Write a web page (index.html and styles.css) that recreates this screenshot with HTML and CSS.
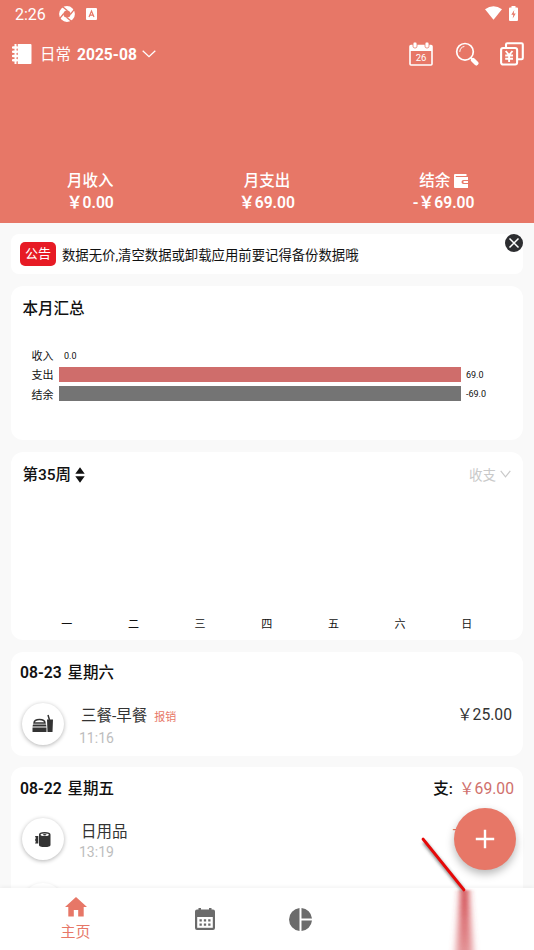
FILE: index.html
```html
<!DOCTYPE html>
<html lang="zh-CN">
<head>
<meta charset="utf-8">
<title>日常账本</title>
<link rel="stylesheet" href="styles.css">
</head>
<body>
<div class="app">
  <header class="header">
    <div class="status">
      <span class="clock">2:26</span>
      <svg class="status-aperture" width="16" height="16" viewBox="0 0 16 16"><circle cx="8" cy="8" r="5.700" fill="none" stroke="#fff" stroke-width="4.400"/><path d="M8.500 4.800 3.600.8M11.200 8.500l4-4.900M7.500 11.200l4.900 4M4.800 7.500l-4 4.900" stroke="#e77767" stroke-width="1.300"/></svg>
      <svg class="status-app" width="11" height="12" viewBox="0 0 11 12"><rect width="11" height="12" rx="1" fill="#fff"/><path d="M3 9 5.500 3 8 9M4 7.200h3" fill="none" stroke="#e77767" stroke-width="1.200"/></svg>
      <span class="grow"></span>
      <svg class="wifi" width="17" height="14" viewBox="0 0 17 14"><path d="M0 3.200Q8.500-2.600 17 3.200L8.500 13.800Z" fill="#fff"/></svg>
      <svg class="battery" width="9" height="15" viewBox="0 0 9 15"><path d="M2.500 0h4v1.500H8q1 0 1 1V14q0 1-1 1H1q-1 0-1-1V2.500q0-1 1-1h1.500z" fill="#fff"/><path d="M5.300 4 2.300 8.700h2L3.700 12.500l3-5h-2z" fill="#e77767"/></svg>
    </div>
    <div class="toolbar">
      <svg class="book" width="20" height="20" viewBox="0 0 20 20"><path d="M2.500 0h2v20h-2zM5.800 0H18.500q1 0 1 1v18q0 1-1 1H5.800z" fill="#fff"/><path d="M1 3.500h4M1 7.700h4M1 12h4M1 16.200h4" stroke="#fff" stroke-width="2.400" stroke-linecap="round"/></svg>
      <span class="book-name">日常</span>
      <span class="month">2025-08</span>
      <svg class="chevron" width="14" height="8" viewBox="0 0 14 8"><path d="m.7.700 6.300 6 6.300-6" fill="none" stroke="#fff" stroke-width="1.300"/></svg>
      <span class="grow"></span>
      <svg class="tool-calendar" width="24" height="24" viewBox="0 0 24 24"><path d="M1 3.500h22V9H1z" fill="#fff"/><rect x="1" y="3.500" width="22" height="19.500" rx="1" fill="none" stroke="#fff" stroke-width="1.600"/><g fill="#fff" stroke="#e77767" stroke-width=".8"><rect x="4" y="0" width="4" height="6" rx="1.800"/><rect x="16" y="0" width="4" height="6" rx="1.800"/></g><text x="12" y="18.700" text-anchor="middle" class="cal-day">26</text></svg>
      <svg class="tool-search" width="24" height="24" viewBox="0 0 24 24"><circle cx="10" cy="9.800" r="8.300" fill="none" stroke="#fff" stroke-width="1.700"/><path d="M4.800 9.500Q5 5.300 9 4.500" fill="none" stroke="#fff" stroke-width="1" stroke-linecap="round"/><path d="m15.800 15.800 2 2" stroke="#fff" stroke-width="1.600"/><path d="m18 18 3.300 3.300" stroke="#fff" stroke-width="4.400" stroke-linecap="round"/></svg>
      <svg class="tool-money" width="24" height="24" viewBox="0 0 24 24"><path d="M6 5V2.500Q6 1.200 7.300 1.200H21.500Q22.800 1.200 22.800 2.500V16q0 1.300-1.300 1.300H18" fill="none" stroke="#fff" stroke-width="2.100"/><rect x="1.100" y="6" width="16" height="16.500" rx="2" fill="none" stroke="#fff" stroke-width="2.100"/><path d="m5.700 9 3.400 4 3.400-4M9.100 13v7M5.200 13.500H13M5.200 16.700H13" fill="none" stroke="#fff" stroke-width="1.900"/></svg>
    </div>
    <div class="totals">
      <div class="total"><span>月收入</span><span class="amount">￥0.00</span></div>
      <div class="total"><span>月支出</span><span class="amount">￥69.00</span></div>
      <div class="total"><span class="balance">结余<svg width="14" height="14" viewBox="0 0 14 14"><path d="M1 0h11.500v2H1.800v1H14v3H9.500Q7.500 6 7.500 8t2 2H14v4H1q-1 0-1-1V1q0-1 1-1z" fill="#fff"/><path d="M9.500 7H14v2H9.500z" fill="#fff"/></svg></span><span class="amount">-￥69.00</span></div>
    </div>
  </header>

  <main class="content">
    <section class="card notice">
      <span class="tag">公告</span>
      <span>数据无价,清空数据或卸载应用前要记得备份数据哦</span>
      <svg class="close" width="18" height="18" viewBox="0 0 18 18"><circle cx="9" cy="9" r="9" fill="#2c2d30"/><path d="m4.500 4.500 9 9m0-9-9 9" stroke="#fff" stroke-width="1.500"/></svg>
    </section>

    <section class="card summary">
      <h2>本月汇总</h2>
      <div class="chart">
        <div class="row"><span class="label">收入</span><i class="bar empty"></i><span class="value">0.0</span></div>
        <div class="row"><span class="label">支出</span><i class="bar expense"></i><span class="value">69.0</span></div>
        <div class="row"><span class="label">结余</span><i class="bar remain"></i><span class="value">-69.0</span></div>
      </div>
    </section>

    <section class="card week">
      <div class="week-head">
        <h2>第35周</h2>
        <svg class="sorter" width="10" height="16" viewBox="0 0 10 16"><path d="M.3 6.800 5 .3l4.700 6.500zM.3 9.200h9.400L5 15.700z" fill="#111"/></svg>
        <span class="grow"></span>
        <span class="filter">收支</span>
        <svg class="filter-arrow" width="11" height="8" viewBox="0 0 11 8"><path d="m.7.800 4.800 6 4.800-6" fill="none" stroke="#c9c9c9" stroke-width="1.200"/></svg>
      </div>
      <div class="days"><span>一</span><span>二</span><span>三</span><span>四</span><span>五</span><span>六</span><span>日</span></div>
    </section>

    <section class="card day">
      <div class="day-head"><span>08-23</span><span>星期六</span></div>
      <div class="entry">
        <span class="icon"><svg width="22" height="20" viewBox="0 0 22 20"><path d="M2 9Q2.300 5.500 7.500 5.500T13 9z" fill="none" stroke="#333" stroke-width="1.500"/><path d="M1 10.500h13l.5 2H.5zM.5 13.500h14V18H.5zM15 5.500h6L20.500 18h-5z" fill="#333"/><path d="M17.500 6 16 1" stroke="#333" stroke-width="1.500"/></svg></span>
        <div class="info"><div class="name">三餐-早餐<span class="reimburse">报销</span></div><div class="time">11:16</div></div>
        <span class="cost">￥25.00</span>
      </div>
    </section>

    <section class="card day last">
      <div class="day-head"><span>08-22</span><span>星期五</span><span class="grow"></span><span>支:</span><span class="sum">￥69.00</span></div>
      <div class="entry">
        <span class="icon"><svg width="18" height="18" viewBox="0 0 18 18"><path d="M5 4.500V15q0 2 5.700 2t5.800-2V4.500Q16.500 2 10.700 2T5 4.500zM1 6h3.300v7.500H1l.8-1.800L1 10l.8-2z" fill="#333"/><ellipse cx="10.700" cy="4.700" rx="4.200" ry="1.300" fill="#fff"/><ellipse cx="10.700" cy="4.700" rx="1.800" ry=".8" fill="#333"/></svg></span>
        <div class="info"><div class="name">日用品</div><div class="time">13:19</div></div>
        <span class="cost hidden-cost">-</span>
      </div>
      <div class="entry"><span class="icon faint"></span></div>
    </section>
  </main>

  <nav class="nav">
    <div class="tab active"><svg width="22" height="20" viewBox="0 0 22 20"><path d="m11 0 11 10h-3.300v9.500h-5.500V13H8.800v6.500H3.300V10H0z" fill="#e77767"/></svg><span>主页</span></div>
    <div class="tab tab-cal"><svg width="20" height="22" viewBox="0 0 20 22"><path d="M2 1.500h1.500V0h2.500v1.500h8V0h2.500v1.500H18q2 0 2 2V20q0 2-2 2H2q-2 0-2-2V3.500q0-2 2-2z" fill="#6b6b6b"/><path d="M2.200 9h15.600v10.800H2.200z" fill="#fff"/><path d="M4.500 12.300h11M4.500 16.700h11" stroke="#6b6b6b" stroke-width="2.300" stroke-dasharray="2.300 2.050"/></svg></div>
    <div class="tab tab-pie"><svg width="23" height="23" viewBox="0 0 23 23"><path d="M10.500 0v23A11.550 11.550 0 0 1 10.500 0zM12.500 0A11.500 11.500 0 0 1 23 10.400H12.500zM12.500 12.600H23A11.500 11.500 0 0 1 12.500 23z" fill="#6b6b6b"/></svg></div>
  </nav>

  <button class="fab" aria-label="添加"><svg width="20" height="20" viewBox="0 0 20 20"><path d="M10 .8v18.400M.8 10h18.400" stroke="#fff" stroke-width="2.400"/></svg></button>
  <svg class="pointer" width="84" height="120" viewBox="0 0 84 120">
    <defs>
      <filter id="soft" x="-150%" y="-20%" width="400%" height="140%"><feGaussianBlur stdDeviation="3.800 1.200"/></filter>
      <filter id="shade" x="-20%" y="-20%" width="140%" height="140%"><feGaussianBlur stdDeviation="1.800"/></filter>
      <linearGradient id="fade" x1="0" y1="0" x2="0" y2="1"><stop offset="0" stop-color="#c8282d"/><stop offset=".4" stop-color="#d0454a" stop-opacity=".78"/><stop offset="1" stop-color="#d8666b" stop-opacity=".6"/></linearGradient>
    </defs>
    <path d="M43 60h7l6 76H37z" fill="url(#fade)" filter="url(#soft)"/>
    <path d="m6 12 39 48" stroke="#444" stroke-opacity=".6" stroke-width="4" filter="url(#shade)"/>
    <path d="M5 9 46 60" stroke="#e60808" stroke-width="2.800" stroke-linecap="round"/>
  </svg>
</div>
</body>
</html>
```
FILE: styles.css
```css
* { box-sizing: border-box; }
body {
  margin: 0;
  font-family: Roboto, "Noto Sans CJK SC", sans-serif;
  color: #111;
}
svg { display: block; flex: none; }
.grow { flex: 1; }
.app {
  position: relative;
  width: 534px;
  height: 950px;
  display: flex;
  flex-direction: column;
  overflow: hidden;
  background: #f9f9f9;
}
.header {
  flex: none;
  height: 223px;
  background: #e77767;
  color: #fff;
}
.status {
  height: 28px;
  display: flex;
  align-items: center;
  padding: 0 15px;
}
.clock { font-size: 16px; width: 44px; }
.status-app { margin-left: 11px; }
.wifi { margin: 0 7px 2px 0; }
.battery { margin: 0 1px 2px 0; }
.toolbar {
  height: 51px;
  display: flex;
  align-items: center;
  padding: 0 10px 0 12px;
}
.book-name { font-size: 15.5px; margin-left: 8px; padding-bottom: 2px; }
.month { font-size: 15.6px; font-weight: 700; margin-left: 6px; padding-top: 2px; }
.chevron { margin-left: 5px; }
.cal-day { font-size: 9.500px; fill: #fff; }
.tool-search { margin-left: 22px; }
.tool-money { margin-left: 21px; }
.totals {
  display: grid;
  grid-template-columns: repeat(3, 1fr);
  margin-top: 92px;
  padding: 0 2px;
}
.total {
  display: flex;
  flex-direction: column;
  align-items: center;
  font-size: 15.5px;
  line-height: 21px;
  font-weight: 500;
}
.balance { display: flex; align-items: center; gap: 4px; }
.balance svg { margin-bottom: 2px; }
.amount { font-size: 15.7px; font-weight: 600; }
.content {
  flex: 1;
  min-height: 0;
  overflow: hidden;
  padding: 11px 11px 0;
  display: flex;
  flex-direction: column;
  gap: 12px;
}
.card {
  flex: none;
  background: #fff;
  border-radius: 12px;
}
h2 {
  margin: 0;
  font-size: 15.5px;
  line-height: 22px;
  font-weight: 500;
}
.notice {
  position: relative;
  height: 40px;
  display: flex;
  align-items: center;
  gap: 6px;
  padding: 0 9px;
  border-radius: 8px;
  font-size: 13.36px;
}
.tag {
  width: 36px;
  height: 24px;
  border-radius: 5px;
  background: #e71b25;
  color: #fff;
  font-size: 13px;
  line-height: 24px;
  text-align: center;
}
.close { position: absolute; top: 0; right: 0; }
.summary { height: 154px; padding: 12px 11.5px; }
.chart { margin-top: 25.500px; padding-left: 6px; }
.row { display: flex; align-items: center; height: 19.300px; }
.label { width: 25px; text-align: right; font-size: 11px; margin-right: 5px; }
.bar { height: 15px; width: 402px; }
.empty { width: 0; }
.expense { background: #cf6d6b; }
.remain { background: #747474; }
.value { font-size: 9px; margin-left: 5.500px; padding-top: 1px; }
.week {
  height: 188px;
  padding: 12px 12px 7px 11.5px;
  display: flex;
  flex-direction: column;
  justify-content: space-between;
}
.week-head { display: flex; align-items: center; height: 22px; }
.week-head h2 { font-weight: 500; }
.sorter { margin-left: 3.5px; }
.filter { font-size: 13.5px; color: #c9c9c9; margin-right: 4px; margin-top: -2px; }
.filter-arrow { margin-bottom: 2px; }
.days {
  display: grid;
  grid-template-columns: repeat(7, 1fr);
  margin: 0 11px;
  font-size: 11px;
  line-height: 17px;
  text-align: center;
}
.day { height: 104px; padding: 10px 9px; }
.last { height: 190px; margin-top: -1px; padding-top: 11px; }
.last .day-head { margin-bottom: 6px; }
.day-head {
  display: flex;
  gap: 6px;
  font-size: 15.5px;
  font-weight: 500;
  line-height: 22px;
  margin-bottom: 7px;
}
.day-head > span:first-child { font-size: 15.7px; font-weight: 600; }
.day-head .sum { color: #d0706c; font-weight: 400; font-size: 15.7px; }
.entry { display: flex; align-items: center; height: 65px; padding: 0 2px; }
.icon {
  width: 42px;
  height: 42px;
  border-radius: 50%;
  display: flex;
  align-items: center;
  justify-content: center;
  box-shadow: 0 1px 4px rgba(0, 0, 0, .3);
}
.faint { opacity: .4; }
.info { flex: 1; margin-left: 15px; padding-top: 4px; }
.name { font-size: 15.5px; line-height: 22px; color: #333; padding-left: 2px; }
.reimburse { font-size: 11px; color: #e77767; margin-left: 7px; }
.time { font-size: 14px; line-height: 18px; color: #bdbdbd; }
.cost { font-size: 15.7px; color: #333; align-self: flex-start; margin-top: 14px; line-height: 20px; }
.hidden-cost { margin-right: 55px; color: #e77767; }
.nav {
  position: relative;
  flex: none;
  height: 62px;
  background: #fff;
  box-shadow: 0 -1px 4px rgba(0, 0, 0, .06);
  display: flex;
  align-items: center;
}
.tab { display: flex; flex-direction: column; align-items: center; }
.active {
  width: 151px;
  color: #e77767;
  font-size: 15px;
  line-height: 22px;
  gap: 4px;
  padding-top: 2px;
}
.tab-cal { margin-left: 44px; }
.tab-pie { margin-left: 74px; }
.fab {
  position: absolute;
  left: 454px;
  top: 808px;
  width: 62px;
  height: 62px;
  padding: 0;
  border: 0;
  border-radius: 50%;
  background: #e77767;
  box-shadow: 0 4px 9px rgba(0, 0, 0, .28);
  display: flex;
  align-items: center;
  justify-content: center;
}
.pointer { position: absolute; left: 418px; top: 830px; }
```
